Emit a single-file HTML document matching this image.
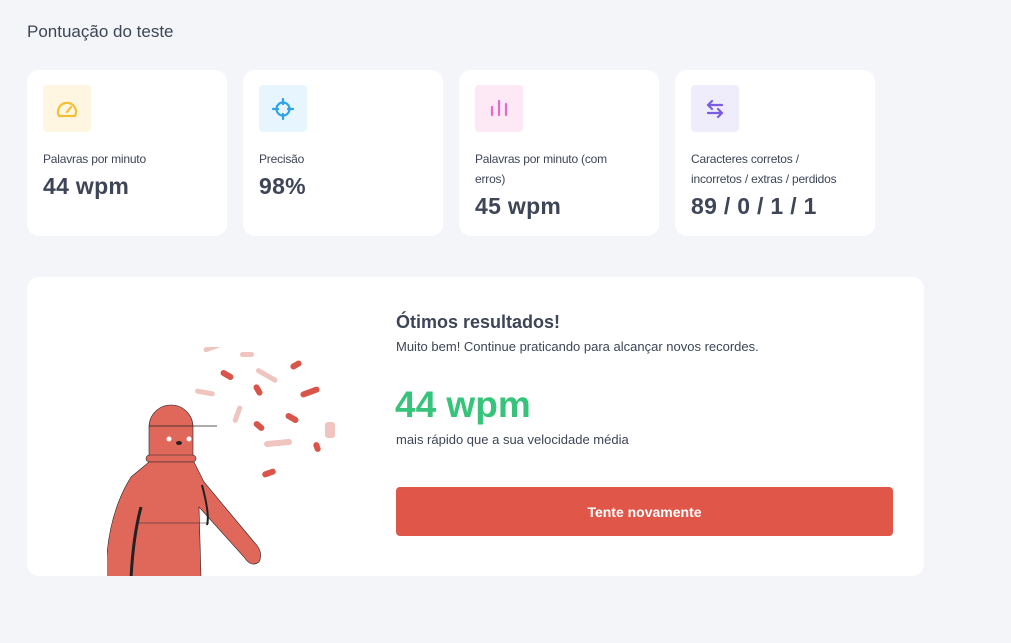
<!DOCTYPE html>
<html><head><meta charset="utf-8"><style>
*{margin:0;padding:0;box-sizing:border-box}
body{width:1011px;height:643px;background:#f4f5f9;font-family:"Liberation Sans",sans-serif;color:#3d4556;position:relative;overflow:hidden}
h1{position:absolute;left:27px;top:22px;font-size:17px;font-weight:normal;color:#3d4556}
.card{position:absolute;top:70px;width:200px;height:166px;background:#fff;border-radius:12px}
.ic{position:absolute;left:16px;top:15px;width:48px;height:47px;border-radius:4px;display:flex;align-items:center;justify-content:center}
.lb{position:absolute;left:16px;top:79px;font-size:12px;line-height:20px;color:#3d4556;width:165px;letter-spacing:-0.2px}
.v{font-size:23px;font-weight:bold;line-height:32px;margin-top:1px;color:#3d4556;letter-spacing:0.3px}
.big{position:absolute;left:27px;top:277px;width:897px;height:299px;background:#fff;border-radius:12px;overflow:hidden}
</style></head><body>
<h1>Pontuação do teste</h1>
<div class="card" style="left:27px"><div class="ic" style="background:#fff6e2"><svg width="26" height="26" viewBox="0 0 26 26" fill="none" stroke="#f2bf35" stroke-width="2.2" stroke-linecap="round"><path d="M5 20 A9 9 0 1 1 21 20 Z"/><path d="M13 16 L17 11"/></svg></div><div class="lb">Palavras por minuto<div class="v">44 wpm</div></div></div>
<div class="card" style="left:243px"><div class="ic" style="background:#e6f5fe"><svg width="26" height="26" viewBox="0 0 26 26" fill="none" stroke="#2ea3ea" stroke-width="2.2" stroke-linecap="round"><circle cx="13" cy="13" r="6.5"/><path d="M13 3v5M13 18v5M3 13h5M18 13h5"/></svg></div><div class="lb">Precisão<div class="v">98%</div></div></div>
<div class="card" style="left:459px"><div class="ic" style="background:#fde8f6"><svg width="26" height="26" viewBox="0 0 26 26" fill="none" stroke="#e66ac9" stroke-width="2.2" stroke-linecap="round"><path d="M6 11v8M13 5v14M20 8v11"/></svg></div><div class="lb" style="width:150px">Palavras por minuto (com erros)<div class="v">45 wpm</div></div></div>
<div class="card" style="left:675px"><div class="ic" style="background:#efecfc"><svg width="26" height="26" viewBox="0 0 26 26" fill="none" stroke="#7b5ce0" stroke-width="2.2" stroke-linecap="round" stroke-linejoin="round"><path d="M20 9H6M10 5L6 9l4 4M6 17h14M16 13l4 4-4 4"/></svg></div><div class="lb" style="width:165px">Caracteres corretos /<br>incorretos / extras / perdidos<div class="v">89 / 0 / 1 / 1</div></div></div>
<div class="big">
<svg style="position:absolute;left:80px;top:70px" width="250" height="250" viewBox="0 0 250 250">
<g fill="#e0685a" stroke="#222" stroke-width="0.6">
<path d="M42 80 a22 22 0 0 1 44 0 v32 h-44z"/>
<rect x="39" y="108" width="50" height="7" rx="3.5"/>
<path d="M42 115 h45 l10 20 l50 60 q10 10 5 20 q-8 6 -15 -5 l-45 -50 l2 70 h-95 q0 -60 25 -100z"/>
</g>
<path d="M42 79 H110" stroke="#222" stroke-width="0.8"/>
<path d="M30 176 H102" stroke="#222" stroke-width="0.6"/>
<path d="M95 138 q8 30 5 40" stroke="#222" stroke-width="2" fill="none"/>
<path d="M34 160 q-8 30 -10 72" stroke="#222" stroke-width="3" fill="none"/>
<circle cx="62" cy="92" r="2.5" fill="#fff"/><circle cx="82" cy="92" r="2.5" fill="#fff"/>
<ellipse cx="72" cy="96" rx="3" ry="2" fill="#222"/>
<g fill="#d9554a">
<rect x="113" y="25" width="14" height="6" rx="3" transform="rotate(30 120 28)"/>
<rect x="145" y="40" width="12" height="6" rx="3" transform="rotate(60 151 43)"/>
<rect x="183" y="15" width="12" height="6" rx="3" transform="rotate(-30 189 18)"/>
<rect x="193" y="42" width="20" height="6" rx="3" transform="rotate(-20 203 45)"/>
<rect x="146" y="76" width="12" height="6" rx="3" transform="rotate(40 152 79)"/>
<rect x="178" y="68" width="14" height="6" rx="3" transform="rotate(30 185 71)"/>
<rect x="205" y="97" width="10" height="6" rx="3" transform="rotate(70 210 100)"/>
<rect x="155" y="123" width="14" height="6" rx="3" transform="rotate(-20 162 126)"/>
</g>
<g fill="#f0c4bf">
<rect x="96" y="-2" width="18" height="5" rx="2.5" transform="rotate(-20 105 0)"/>
<rect x="133" y="5" width="14" height="5" rx="2.5"/>
<rect x="148" y="26" width="24" height="5" rx="2.5" transform="rotate(30 160 28)"/>
<rect x="88" y="43" width="20" height="5" rx="2.5" transform="rotate(10 98 45)"/>
<rect x="121" y="65" width="18" height="5" rx="2.5" transform="rotate(-70 130 67)"/>
<rect x="157" y="93" width="28" height="6" rx="3" transform="rotate(-5 171 96)"/>
<rect x="218" y="75" width="10" height="16" rx="3"/>
</g>
</svg>
<div style="position:absolute;left:369px;top:35px;font-size:18px;font-weight:bold;color:#3d4556">Ótimos resultados!</div>
<div style="position:absolute;left:369px;top:62px;font-size:13px;color:#3d4556">Muito bem! Continue praticando para alcançar novos recordes.</div>
<div style="position:absolute;left:368px;top:107px;font-size:37px;font-weight:bold;color:#36c47a">44 wpm</div>
<div style="position:absolute;left:369px;top:155px;font-size:13px;color:#3d4556">mais rápido que a sua velocidade média</div>
<div style="position:absolute;left:369px;top:210px;width:497px;height:49px;background:#e0574a;border-radius:4px;color:#fff;font-size:14px;font-weight:bold;display:flex;align-items:center;justify-content:center">Tente novamente</div>
</div>
</body></html>
